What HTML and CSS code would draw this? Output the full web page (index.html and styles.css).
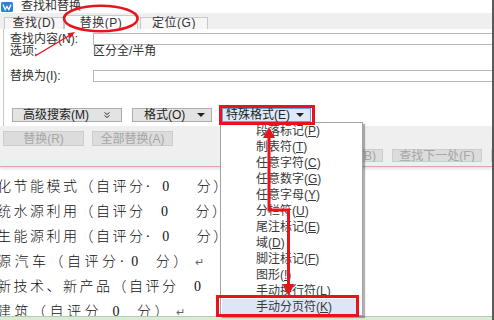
FILE: index.html
```html
<!DOCTYPE html>
<html lang="zh-CN">
<head>
    <meta charset="UTF-8">
    <meta name="viewport" content="width=device-width, initial-scale=1.0">
    <title>查找和替换</title>
    <link rel="stylesheet" href="styles.css">
</head>
<body>
    <div class="screen">
        <!-- 标题栏 -->
        <div class="titlebar">
            <svg class="logo" width="12" height="10" viewBox="0 0 12 10">
                <rect x="0" y="0" width="12" height="10" rx="1.5" fill="#2f7fe0"/>
                <polyline points="2,2.5 4.2,7.5 6,4.5 7.8,7.5 10,2.5" fill="none" stroke="#fff" stroke-width="1.3"/>
            </svg>
            <span>查找和替换</span>
        </div>

        <!-- 选项卡 -->
        <div class="tabs">
            <div class="tab first">查找(D)</div>
            <div class="tab active">替换(P)</div>
            <div class="tab last">定位(G)</div>
        </div>

        <!-- 替换面板 -->
        <div class="panel">
            <div class="field">
                <label>查找内容(N):</label>
                <div class="input"></div>
            </div>
            <div class="options">
                <span class="label">选项:</span>
                <span>区分全/半角</span>
            </div>
            <div class="field gap">
                <label>替换为(I):</label>
                <div class="input"></div>
            </div>
            <div class="btnrow">
                <button class="btn wide">高级搜索(M)
                    <svg class="chev" width="6" height="6" viewBox="0 0 6 6">
                        <polyline points="0.5,0.5 3,2.5 5.5,0.5" fill="none" stroke="#333" stroke-width="1"/>
                        <polyline points="0.5,3.5 3,5.5 5.5,3.5" fill="none" stroke="#333" stroke-width="1"/>
                    </svg>
                </button>
                <button class="btn mid">格式(O)<span class="caret"></span></button>
                <button class="btn special">特殊格式(E)<span class="caret"></span></button>
            </div>
        </div>

        <!-- 操作按钮 -->
        <div class="actions">
            <div class="act-row">
                <button class="btn off">替换(R)</button>
                <button class="btn off">全部替换(A)</button>
            </div>
            <div class="act-row right">
                <button class="btn off">查找上一处(B)</button>
                <button class="btn off">查找下一处(F)</button>
                <button class="btn off">关闭</button>
            </div>
        </div>

        <!-- 文档正文 -->
        <div class="doc">
            <p>化节能模式（自评分<span class="sp wide">·0 </span>分）</p>
            <p>统水源利用（自评分<span class="sp wide"> 0 </span>分）</p>
            <p>生能源利用（自评分<span class="sp wide">·0 </span>分）</p>
            <p class="loose">源汽车（自评分<span class="sp">·0 </span>分）<span class="ret">↵</span></p>
            <p>新技术、新产品（自评分<span class="sp wide"> 0 </span>分）</p>
            <p class="loose">建筑（自评分<span class="sp"> 0 </span>分）<span class="ret">↵</span></p>
        </div>

        <div class="statusbar"></div>
    </div>

    <!-- 特殊格式下拉菜单 -->
    <ul class="menu">
        <li>段落标记(<u>P</u>)</li>
        <li>制表符(<u>T</u>)</li>
        <li>任意字符(<u>C</u>)</li>
        <li>任意数字(<u>G</u>)</li>
        <li>任意字母(<u>Y</u>)</li>
        <li>分栏符(<u>U</u>)</li>
        <li>尾注标记(<u>E</u>)</li>
        <li>域(<u>D</u>)</li>
        <li>脚注标记(<u>F</u>)</li>
        <li>图形(<u>!</u>)</li>
        <li>手动换行符(<u>L</u>)</li>
        <li class="hot">手动分页符(<u>K</u>)</li>
    </ul>

    <!-- 红色标注 -->
    <svg class="marks" width="494" height="320" viewBox="0 0 494 320">
        <ellipse cx="100.8" cy="18.5" rx="36.8" ry="12.8" fill="none" stroke="#e8141b" stroke-width="2.6"/>
        <line x1="35" y1="56" x2="71" y2="34.5" stroke="#e8141b" stroke-width="1.3"/>
        <polygon points="75,32 67.5,33.2 70.5,38" fill="#e8141b"/>
        <rect x="220.5" y="106.5" width="93" height="17" fill="none" stroke="#e8141b" stroke-width="3"/>
        <rect x="217.5" y="296.5" width="140" height="19" fill="none" stroke="#e8141b" stroke-width="3"/>
        <polyline points="269,136 269,210 288.5,210 288.5,285" fill="none" stroke="#e8141b" stroke-width="3"/>
        <polygon points="269,127 263,138 275,138" fill="#e8141b"/>
        <polygon points="288.5,296 282.5,284 294.5,284" fill="#e8141b"/>
    </svg>
</body>
</html>
```

FILE: styles.css
```css
* {
    box-sizing: border-box;
    margin: 0;
    padding: 0;
}
body {
    width: 494px;
    height: 320px;
    overflow: hidden;
    position: relative;
    background-color: #fff;
    font-family: "Liberation Sans", "Noto Sans CJK SC", sans-serif;
    font-size: 12px;
    color: #333;
}
.screen {
    width: 494px;
    height: 320px;
    display: flex;
    flex-direction: column;
    border-right: 2px solid #5a5a5a;
}
.titlebar {
    height: 13px;
    display: flex;
    align-items: center;
    padding-left: 1px;
    line-height: 13px;
    color: #333;
}
.logo {
    margin-right: 8px;
}
.tabs {
    height: 16px;
    display: flex;
    align-items: flex-end;
    padding-left: 4px;
    background-color: #efefef;
}
.tab {
    height: 12px;
    line-height: 11px;
    text-align: center;
    letter-spacing: 0.5px;
    background-color: #f6f6f6;
    border: 1px solid #c9c9c9;
    border-bottom: none;
}
.tab.first {
    width: 60px;
}
.tab.active {
    width: 74px;
    height: 14px;
    line-height: 14px;
    background-color: #fff;
}
.tab.last {
    width: 68px;
    margin-left: 2px;
}
.panel {
    height: 97px;
    margin-left: 3px;
    padding: 4px 0 0 6px;
    background-color: #fff;
    border-left: 1px solid #c8c8c8;
}
.field {
    height: 12px;
    display: flex;
    align-items: center;
}
.field label {
    width: 83px;
    line-height: 12px;
}
.input {
    flex: 1;
    height: 12px;
    border: 1px solid #b8b8b8;
    border-right: none;
}
.field.gap {
    margin-top: 12px;
}
.options {
    height: 13px;
    line-height: 13px;
    display: flex;
}
.options .label {
    width: 83px;
}
.btnrow {
    height: 14px;
    margin-top: 26px;
    padding-left: 2px;
    display: flex;
    gap: 10px;
}
.btn {
    height: 14px;
    display: flex;
    align-items: center;
    flex-shrink: 0;
    font-family: inherit;
    font-size: 12px;
    line-height: 12px;
    color: #222;
    background-color: #e3e3e3;
    border: 1px solid #adadad;
}
.btn.wide {
    width: 110px;
    padding-left: 10px;
}
.chev {
    margin-left: 15px;
}
.btn.mid {
    width: 80px;
    padding-left: 11px;
}
.caret {
    width: 0;
    height: 0;
    margin-left: auto;
    margin-right: 6px;
    border-left: 4px solid transparent;
    border-right: 4px solid transparent;
    border-top: 4px solid #222;
}
.btn.special {
    width: 89px;
    padding-left: 3px;
    background-color: #dde9f8;
    border-color: #6f9fd8;
}
.actions {
    height: 41px;
    padding-top: 5px;
    background-color: #efefef;
    border-bottom: 1px solid #e0a3b6;
    box-shadow: 0 2px 3px rgba(0, 0, 0, 0.12);
}
.act-row {
    height: 15px;
    display: flex;
    gap: 8px;
    padding-left: 3px;
    overflow: hidden;
}
.act-row.right {
    height: 13px;
    margin-top: 3px;
    padding-left: 293px;
    gap: 9px;
}
.btn.off {
    width: 81px;
    height: 100%;
    justify-content: center;
    color: #a6a6a6;
    background-color: #dcdcdc;
    border-color: #cdcdcd;
}
.act-row.right .btn.off {
    width: 90px;
}
.doc {
    height: 149px;
    padding-top: 7px;
    overflow: hidden;
}
.doc p {
    height: 25px;
    line-height: 25px;
    margin-left: -3px;
    white-space: nowrap;
    font-family: "Liberation Serif", "Noto Sans CJK SC", serif;
    font-size: 14px;
    font-weight: 300;
    letter-spacing: 2.5px;
    color: #111;
}
.doc p.loose {
    letter-spacing: 3.5px;
}
.sp {
    letter-spacing: 7px;
}
.sp.wide {
    letter-spacing: 12px;
}
.ret {
    margin-left: 4px;
    font-size: 11px;
    color: #666;
}
.statusbar {
    height: 4px;
    background-color: #d8ecd4;
    border-top: 1px solid #b9cab6;
}
.menu {
    position: absolute;
    left: 220px;
    top: 122px;
    width: 143px;
    height: 194px;
    list-style: none;
    background-color: #fff;
    border: 1px solid #a3a3a3;
    box-shadow: 2px 2px 1px rgba(0, 0, 0, 0.3);
}
.menu li {
    height: 16px;
    line-height: 16px;
    margin: 0 5px 0 1px;
    padding-left: 34px;
    color: #3a3a3a;
}
.menu li.hot {
    background-color: #dce6f5;
}
.marks {
    position: absolute;
    left: 0;
    top: 0;
}
```
